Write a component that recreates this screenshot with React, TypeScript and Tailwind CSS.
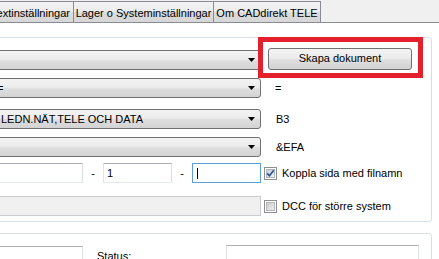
import { JSX } from "react";

const comboBg =
  "bg-[linear-gradient(#f3f3f3_0%,#ececec_45%,#dedede_55%,#d3d3d3_100%)]";

const Arrow = () => (
  <svg width="7" height="4" viewBox="0 0 7 4" className="shrink-0">
    <path d="M0 0 H7 L3.5 4 Z" fill="#000" />
  </svg>
);

const Combo = ({ text, pad }: { text?: string; pad: string }) => (
  <div
    className={`flex h-[20px] w-[291px] shrink-0 items-center rounded-[3px] border border-[#707070] pr-[5px] ${comboBg}`}
  >
    <span className={`flex-1 overflow-hidden whitespace-nowrap ${pad}`}>
      {text}
    </span>
    <Arrow />
  </div>
);

const CheckBox = ({ checked }: { checked?: boolean }) => (
  <svg width="13" height="13" viewBox="0 0 13 13" className="shrink-0">
    <defs>
      <linearGradient id={checked ? "cbOn" : "cbOff"} x1="0" y1="0" x2="1" y2="1">
        <stop offset="0" stopColor={checked ? "#c4cbd8" : "#c8c8c8"} />
        <stop offset="1" stopColor={checked ? "#f4f6f9" : "#f2f2f2"} />
      </linearGradient>
    </defs>
    <rect x="0.5" y="0.5" width="12" height="12" fill="#fff" stroke="#8e8f8f" />
    <rect x="2.5" y="2.5" width="8" height="8" fill={`url(#${checked ? "cbOn" : "cbOff"})`} stroke={checked ? "#aeb6c4" : "#b7b7b7"} />
    {checked && (
      <path d="M3.2 6.4 L5.4 8.8 L9.8 3.2" fill="none" stroke="#34508e" strokeWidth="1.7" />
    )}
  </svg>
);

const Tab = ({ label, cls }: { label: string; cls: string }): JSX.Element => (
  <div
    className={`flex h-[21px] shrink-0 items-center justify-center border border-b-0 border-[#898c95] bg-[linear-gradient(#f3f3f3,#ebebeb_50%,#dddddd_50%,#d6d6d6)] pt-[2px] whitespace-nowrap ${cls}`}
  >
    {label}
  </div>
);

export default function App() {
  return (
    <div className="relative h-[259px] w-[439px] overflow-hidden bg-[#f0f0f0] font-['Liberation_Sans',Arial,sans-serif] text-[11px] leading-[13px] text-black">
      {/* tab strip */}
      <div className="flex h-[22px] items-end">
        <Tab label="Textinställningar" cls="-ml-[13px] w-[87px]" />
        <Tab label="Lager o Systeminställningar" cls="w-[140px] border-l-0" />
        <Tab label="Om CADdirekt TELE" cls="w-[107px] border-l-0" />
      </div>

      {/* tab page */}
      <div className="h-[237px] border-t border-[#898c95] bg-white">
        <div className="-ml-[40px] mt-[14px] w-[472px] rounded-[3px] border border-[#d5dfe5] pl-[9px] pt-[12px] pb-[5px]">
          <div className="flex items-center">
            <Combo pad="pl-[30px]" />
            <button className={`-mt-[3px] ml-[7px] h-[22px] w-[144px] rounded-[3px] border border-[#707070] ${comboBg}`}>
              Skapa dokument
            </button>
          </div>
          <div className="mt-[8px] flex items-center">
            <Combo text="=" pad="pl-[26px]" />
            <span className="ml-[14px]">=</span>
          </div>
          <div className="mt-[11px] flex items-center">
            <Combo text="LEDN.NÄT,TELE OCH DATA" pad="pl-[30px]" />
            <span className="ml-[15px]">B3</span>
          </div>
          <div className="mt-[8px] flex items-center">
            <Combo pad="pl-[30px]" />
            <span className="ml-[15px]">&amp;EFA</span>
          </div>
          <div className="mt-[6px] flex items-center">
            <div className="h-[20px] w-[113px] border border-[#abadb3] border-t-[#abadb3] border-l-[#e2e3ea] border-r-[#dbdfe6] border-b-[#e3e9ef] bg-white" />
            <span className="w-[20px] text-center">-</span>
            <div className="flex h-[20px] w-[69px] items-center border border-[#abadb3] border-l-[#e2e3ea] border-r-[#dbdfe6] border-b-[#e3e9ef] bg-white pl-[3px]">
              1
            </div>
            <span className="w-[20px] text-center">-</span>
            <div className="flex h-[20px] w-[69px] items-center border border-[#5b9ede] bg-white pl-[4px]">
              <span className="h-[11px] w-px bg-black" />
            </div>
            <span className="ml-[3px]">
              <CheckBox checked />
            </span>
            <span className="ml-[5px] whitespace-nowrap">Koppla sida med filnamn</span>
          </div>
          <div className="mt-[13px] flex items-center">
            <div className="h-[20px] w-[291px] border border-[#c9cbcf] bg-[#f0f0f0]" />
            <span className="ml-[3px]">
              <CheckBox />
            </span>
            <span className="ml-[5px] whitespace-nowrap">DCC för större system</span>
          </div>
        </div>

        <div className="-ml-[40px] mt-[11px] h-[40px] w-[472px] rounded-[3px] border border-[#d5dfe5] pl-[9px] pt-[12px]">
          <div className="flex items-start">
            <div className="h-[20px] w-[113px] border border-[#abadb3] border-l-[#e2e3ea] border-r-[#dbdfe6] bg-white" />
            <span className="w-[143px] pl-[14px] pt-[4px]">Status:</span>
            <div className="-mt-px h-[20px] w-[193px] border border-[#abadb3] border-l-[#e2e3ea] border-r-[#dbdfe6] bg-white" />
          </div>
        </div>
      </div>

      {/* red highlight drawn over the button */}
      <div className="absolute left-[258px] top-[37px] h-[41px] w-[165px] border-[5px] border-[#e3202b]" />
    </div>
  );
}
